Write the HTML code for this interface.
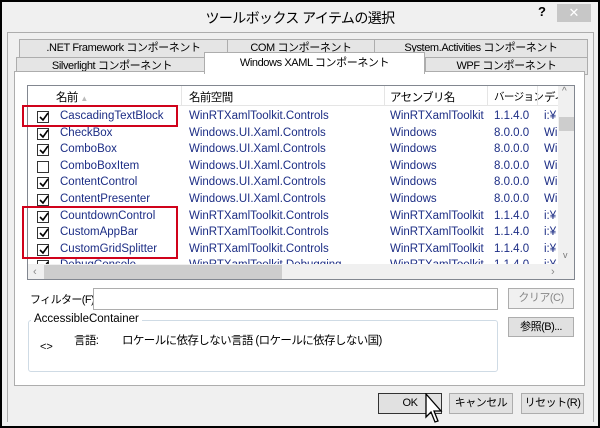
<!DOCTYPE html>
<html><head><meta charset="utf-8"><style>
*{box-sizing:border-box;margin:0;padding:0}
body{width:600px;height:428px;background:#000;font-family:"Liberation Sans","Noto Sans CJK JP",sans-serif;font-size:11.5px;color:#000;position:relative;overflow:hidden}
.win{position:absolute;left:2px;top:2px;width:596px;height:424px;background:#f0f0f0}
.a{position:absolute;white-space:nowrap}
.j{letter-spacing:-0.6px}
.tab{position:absolute;border:1px solid #adadad;background:#e5e5e5;text-align:center;line-height:17px;height:19px;white-space:nowrap;letter-spacing:-0.4px;font-size:11px}
.panel{position:absolute;left:14px;top:71px;width:571px;height:315px;background:#fff;border:1px solid #adadad}
.list{position:absolute;left:27px;top:85px;width:548px;height:195px;border:1px solid #828790;background:#fff;overflow:hidden}
.row{position:absolute;left:0;height:17px;line-height:17px;width:530px}
.row span{position:absolute;top:0;white-space:nowrap}
.cb{position:absolute;left:9px;top:3px;width:12px;height:12px;border:1px solid #333;background:#fff}
.cb svg{position:absolute;left:1px;top:0}
.n{left:32px;color:#1c2d85}
.ns{left:161px;color:#1c2d85}
.as{left:362px;color:#1c2d85}
.v{left:466px;color:#1c2d85}
.d{left:516px;color:#1c2d85}
.btn{position:absolute;border:1px solid #adadad;background:#e1e1e1;text-align:center;line-height:18px;white-space:nowrap;letter-spacing:-0.5px;font-size:11px}
</style></head><body>
<div class="win">
<div class="a j" style="left:0;width:596px;top:6px;text-align:center;font-size:14px">ツールボックス アイテムの選択</div>
<div class="a" style="left:536px;top:2px;font-weight:bold;font-size:13px">?</div>
<div class="a" style="left:555px;top:2px;width:34px;height:18px;background:#c7c7c7;color:#fff;text-align:center;line-height:17px;font-size:13px">✕</div>
<div style="position:absolute;left:5px;top:30px;width:587px;height:390px;border:1px solid #adadad;border-bottom:none"></div>
<div class="tab" style="left:17px;top:37px;width:209px">.NET Framework コンポーネント</div>
<div class="tab" style="left:225px;top:37px;width:148px">COM コンポーネント</div>
<div class="tab" style="left:372px;top:37px;width:214px">System.Activities コンポーネント</div>
<div class="tab" style="left:14px;top:55px;width:192px;height:18px">Silverlight コンポーネント</div>
<div class="tab" style="left:423px;top:55px;width:163px;height:18px">WPF コンポーネント</div>
</div>
<div class="panel"></div>
<div class="tab" style="left:204px;top:52px;width:221px;height:22px;background:#fff;border-bottom:none;line-height:20px">Windows XAML コンポーネント</div>
<div class="list">
<div style="position:absolute;left:0;top:0;width:530px;height:20px;border-bottom:1px solid #e5e5e5"></div>
<div class="a j" style="left:28px;top:3px">名前 <span style="color:#bbb;font-size:8px">▲</span></div>
<div style="position:absolute;left:153px;top:0;width:1px;height:20px;background:#e5e5e5"></div>
<div class="a j" style="left:161px;top:3px">名前空間</div>
<div style="position:absolute;left:356px;top:0;width:1px;height:20px;background:#e5e5e5"></div>
<div class="a j" style="left:362px;top:3px">アセンブリ名</div>
<div style="position:absolute;left:459px;top:0;width:1px;height:20px;background:#e5e5e5"></div>
<div class="a j" style="left:466px;top:3px;font-size:10.5px">バージョン</div>
<div style="position:absolute;left:509px;top:0;width:1px;height:20px;background:#e5e5e5"></div>
<div class="a j" style="left:516px;top:3px">ディ</div>
<div id="rows"></div>
<div style="position:absolute;left:530px;top:0;width:17px;height:178px;background:#f0f0f0"></div>
<div class="a" style="left:534px;top:0;color:#777;font-size:10px">^</div>
<div style="position:absolute;left:531px;top:31px;width:15px;height:14px;background:#cdcdcd"></div>
<div class="a" style="left:535px;top:164px;color:#777;font-size:9px">v</div>
<div style="position:absolute;left:0;top:178px;width:547px;height:17px;background:#f0f0f0"></div>
<div style="position:absolute;left:16px;top:179px;width:238px;height:15px;background:#cdcdcd"></div>
<div class="a" style="left:5px;top:180px;color:#888;font-size:11px">‹</div>
<div class="a" style="left:523px;top:180px;color:#888;font-size:11px">›</div>
</div>
<div style="position:absolute;left:22px;top:105px;width:156px;height:22px;border:2px solid #d0021b"></div>
<div style="position:absolute;left:22px;top:206px;width:156px;height:53px;border:2px solid #d0021b"></div>
<div class="a j" style="left:30px;top:291px;font-size:11px">フィルター(F):</div>
<div style="position:absolute;left:93px;top:288px;width:405px;height:22px;border:1px solid #adadad;background:#fff"></div>
<div class="btn" style="left:508px;top:288px;width:66px;height:21px;color:#888;background:#f0f0f0">クリア(C)</div>
<div style="position:absolute;left:28px;top:320px;width:470px;height:52px;border:1px solid #cfdbe5;border-radius:3px"></div>
<div class="a" style="left:31px;top:313px;background:#fff;padding:0 3px">AccessibleContainer</div>
<div class="a" style="left:40px;top:341px;font-size:11px">&lt;&gt;</div>
<div class="a j" style="left:74px;top:332px">言語:</div>
<div class="a j" style="left:122px;top:332px">ロケールに依存しない言語 (ロケールに依存しない国)</div>
<div class="btn" style="left:508px;top:317px;width:66px;height:20px">参照(B)...</div>
<div class="btn" style="left:378px;top:393px;width:64px;height:21px;border:1px solid #333">OK</div>
<div class="btn" style="left:449px;top:393px;width:64px;height:21px">キャンセル</div>
<div class="btn" style="left:521px;top:393px;width:63px;height:21px">リセット(R)</div>
<svg style="position:absolute;left:423px;top:393px" width="22" height="34" viewBox="0 0 22 34"><path d="M3 1 L3 24 L8 19 L12 29 L15 28 L11 18 L18 18 Z" fill="#fff" stroke="#000" stroke-width="1.3"/></svg>
<script>
var d=[["CascadingTextBlock","WinRTXamlToolkit.Controls","WinRTXamlToolkit","1.1.4.0","i:¥",1],
["CheckBox","Windows.UI.Xaml.Controls","Windows","8.0.0.0","Wi",1],
["ComboBox","Windows.UI.Xaml.Controls","Windows","8.0.0.0","Wi",1],
["ComboBoxItem","Windows.UI.Xaml.Controls","Windows","8.0.0.0","Wi",0],
["ContentControl","Windows.UI.Xaml.Controls","Windows","8.0.0.0","Wi",1],
["ContentPresenter","Windows.UI.Xaml.Controls","Windows","8.0.0.0","Wi",1],
["CountdownControl","WinRTXamlToolkit.Controls","WinRTXamlToolkit","1.1.4.0","i:¥",1],
["CustomAppBar","WinRTXamlToolkit.Controls","WinRTXamlToolkit","1.1.4.0","i:¥",1],
["CustomGridSplitter","WinRTXamlToolkit.Controls","WinRTXamlToolkit","1.1.4.0","i:¥",1],
["DebugConsole","WinRTXamlToolkit.Debugging","WinRTXamlToolkit","1.1.4.0","i:¥",1]];
var h="";d.forEach(function(r,i){var t=22+i*16.6;
h+='<div class="row" style="top:'+t+'px"><div class="cb">'+(r[5]?'<svg width="10" height="10"><path d="M1 5 L4 8 L9 1" fill="none" stroke="#000" stroke-width="1.6"/></svg>':'')+'</div><span class="n">'+r[0]+'</span><span class="ns">'+r[1]+'</span><span class="as">'+r[2]+'</span><span class="v">'+r[3]+'</span><span class="d">'+r[4]+'</span></div>';});
document.getElementById("rows").innerHTML=h;
</script>
</body></html>
